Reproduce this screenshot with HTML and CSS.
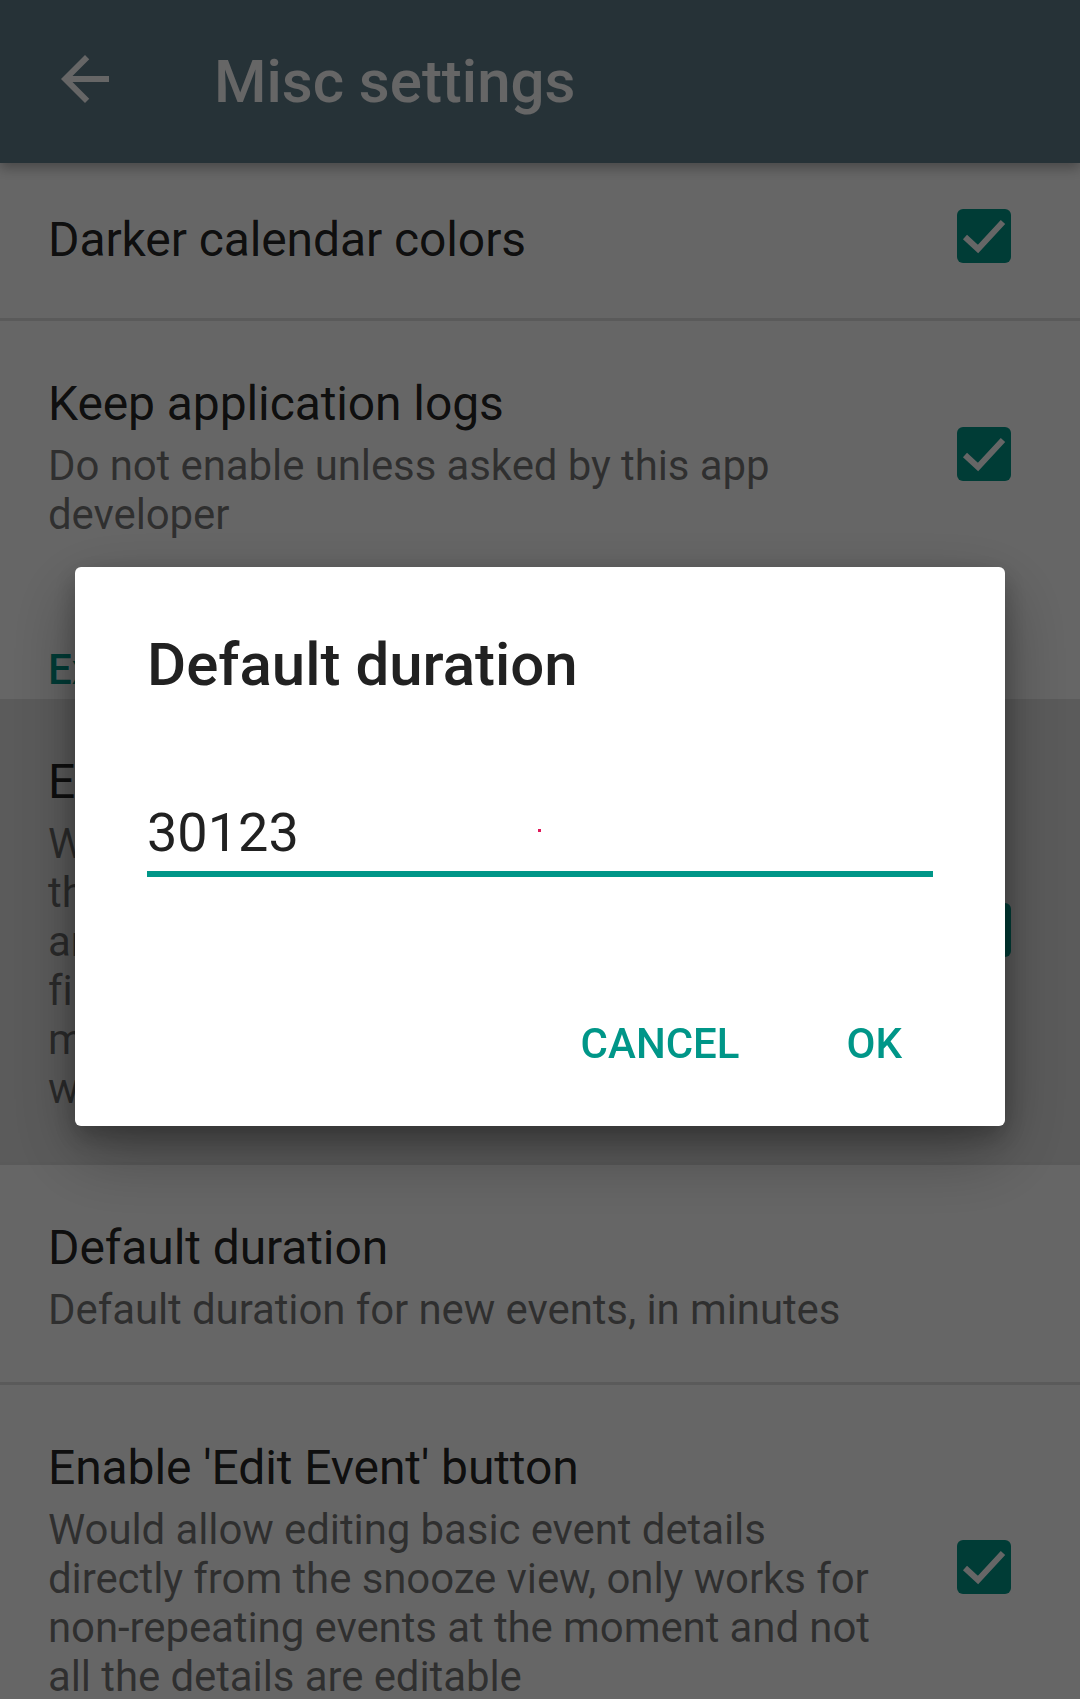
FILE: index.html
```html
<!DOCTYPE html>
<html lang="en">
<head>
<meta charset="utf-8">
<title>Misc settings</title>
<link rel="stylesheet" href="styles.css">
</head>
<body>
  <div class="app">
    <header class="toolbar">
      <svg class="toolbar-back" viewBox="0 0 24 24" aria-hidden="true"><path d="M20 11H7.83l5.59-5.59L12 4l-8 8 8 8 1.41-1.41L7.83 13H20v-2z"/></svg>
      <h1 class="toolbar-title">Misc settings</h1>
    </header>

    <main class="prefs">
      <div class="pref pref--single">
        <div class="pref-text">
          <div class="pref-title">Darker calendar colors</div>
        </div>
        <span class="checkbox"><svg viewBox="0 0 54 54"><polyline points="8,28 21,40 46,13"/></svg></span>
      </div>
      <div class="divider"></div>

      <div class="pref">
        <div class="pref-text">
          <div class="pref-title">Keep application logs</div>
          <div class="pref-summary">Do not enable unless asked by this app developer</div>
        </div>
        <span class="checkbox"><svg viewBox="0 0 54 54"><polyline points="8,28 21,40 46,13"/></svg></span>
      </div>

      <div class="category">Experimental</div>

      <div class="pref pref--pressed">
        <div class="pref-text">
          <div class="pref-title">Enable calendar monitoring</div>
          <div class="pref-summary">When enabled, the app would monitor<br>the calendar for new events that<br>are missed by the stock calendar and<br>fire notifications for them, this<br>might increase battery consumption<br>when the calendar is large</div>
        </div>
        <span class="checkbox"><svg viewBox="0 0 54 54"><polyline points="8,28 21,40 46,13"/></svg></span>
      </div>
      <div class="divider"></div>

      <div class="pref">
        <div class="pref-text">
          <div class="pref-title">Default duration</div>
          <div class="pref-summary">Default duration for new events, in minutes</div>
        </div>
      </div>
      <div class="divider"></div>

      <div class="pref">
        <div class="pref-text">
          <div class="pref-title">Enable 'Edit Event' button</div>
          <div class="pref-summary">Would allow editing basic event details directly from the snooze view, only works for non-repeating events at the moment and not all the details are editable</div>
        </div>
        <span class="checkbox"><svg viewBox="0 0 54 54"><polyline points="8,28 21,40 46,13"/></svg></span>
      </div>
    </main>
  </div>

  <div class="scrim"></div>

  <div class="dialog" role="dialog">
    <h2 class="dialog-title">Default duration</h2>
    <div class="dialog-input">30123<span class="dialog-dot"></span></div>
    <div class="dialog-actions">
      <span class="dialog-btn">Cancel</span>
      <span class="dialog-btn">OK</span>
    </div>
  </div>
</body>
</html>
```
FILE: styles.css
```css
* {
  box-sizing: border-box;
  margin: 0;
  padding: 0;
}

html,
body {
  width: 1080px;
  height: 1699px;
  overflow: hidden;
}

body {
  position: relative;
  background: #ffffff;
  font-family: Roboto, "Noto Sans", "Liberation Sans", sans-serif;
}

/* Toolbar */
.toolbar {
  position: relative;
  z-index: 1;
  height: 163px;
  display: flex;
  align-items: center;
  gap: 93px;
  padding-left: 49px;
  background: #607d8b;
  box-shadow: 0 5px 12px rgba(0, 0, 0, 0.3);
}

.toolbar-back {
  width: 72px;
  height: 72px;
  margin-top: -5px;
  fill: #ffffff;
  flex: none;
}

.toolbar-title {
  font-size: 60px;
  font-weight: 500;
  line-height: 70px;
  color: #ffffff;
}

/* Preference list */
.pref {
  display: flex;
  align-items: center;
  gap: 79px;
  padding: 55px 69px 48px 48px;
}

.pref--single {
  padding-top: 49px;
  padding-bottom: 50px;
}

.pref--pressed {
  background: #e4e4e4;
  padding-bottom: 49px;
}

.pref-text {
  flex: 1;
  min-width: 0;
}

.pref-title {
  font-size: 48px;
  line-height: 56px;
  letter-spacing: -0.1px;
  color: rgba(0, 0, 0, 0.87);
}

.pref-summary {
  margin-top: 9px;
  font-size: 42px;
  line-height: 49px;
  letter-spacing: -0.1px;
  color: rgba(0, 0, 0, 0.54);
}

.divider {
  height: 3px;
  background: #e1e1e1;
}

.category {
  padding: 58px 48px 5px;
  font-size: 42px;
  line-height: 49px;
  font-weight: 500;
  color: #009688;
}

.checkbox {
  flex: none;
  display: flex;
  width: 54px;
  height: 54px;
  margin-top: -8px;
  border-radius: 6px;
  background: #009688;
}

.checkbox svg {
  width: 54px;
  height: 54px;
}

.checkbox polyline {
  fill: none;
  stroke: #ffffff;
  stroke-width: 6;
}

/* Scrim + dialog */
.scrim {
  position: fixed;
  inset: 0;
  z-index: 10;
  background: rgba(0, 0, 0, 0.6);
}

.dialog {
  position: fixed;
  z-index: 11;
  left: 75px;
  top: 567px;
  width: 930px;
  height: 559px;
  display: flex;
  flex-direction: column;
  padding: 63px 72px 0;
  background: #ffffff;
  border-radius: 6px;
  box-shadow: 0 27px 70px rgba(0, 0, 0, 0.32), 0 10px 26px rgba(0, 0, 0, 0.26);
}

.dialog-title {
  font-size: 60px;
  font-weight: 500;
  line-height: 70px;
  color: #212121;
}

.dialog-input {
  position: relative;
  margin-top: 101px;
  padding-bottom: 7px;
  font-size: 54px;
  line-height: 63px;
  color: #212121;
  border-bottom: 6px solid #009688;
}

.dialog-dot {
  position: absolute;
  left: 391px;
  top: 28px;
  width: 3px;
  height: 3px;
  background: #e0185a;
}

.dialog-actions {
  margin: auto -72px 0;
  display: flex;
  justify-content: flex-end;
  gap: 107px;
  padding: 0 103px 58px 0;
}

.dialog-btn {
  font-size: 42px;
  line-height: 49px;
  font-weight: 500;
  text-transform: uppercase;
  color: #009688;
}
```
